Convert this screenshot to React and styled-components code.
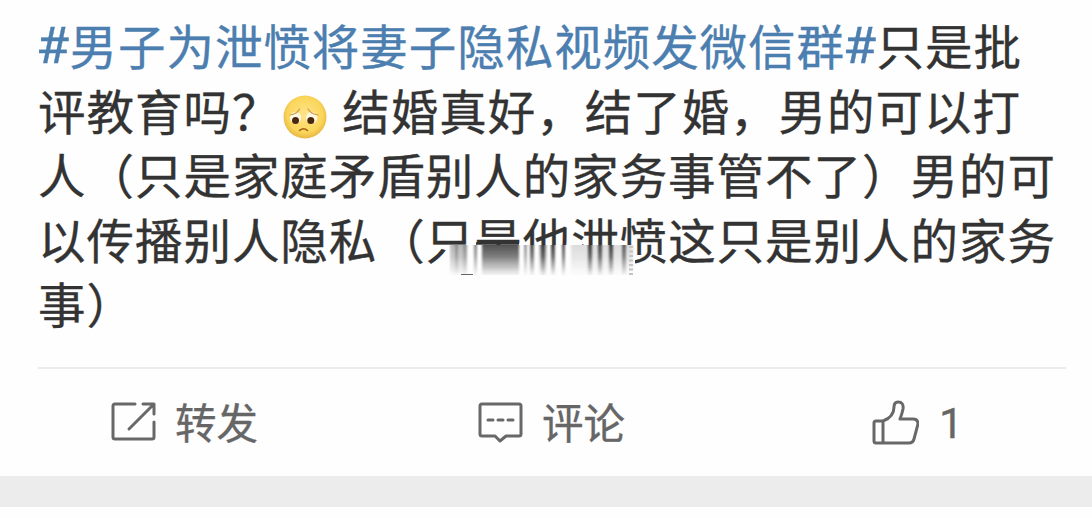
import React from 'react';
import styled, { createGlobalStyle } from 'styled-components';

const GlobalStyle = createGlobalStyle`
    body {
        margin: 0;
        background: #fefefe;
    }
`;

const Page = styled.div`
    box-sizing: border-box;
    width: 1092px;
    height: 518px;
    overflow: hidden;
    background: #fefefe;
    font-family: "Noto Sans CJK SC", "Noto Sans", sans-serif;
`;

const Post = styled.article`
    height: 476px;
    display: flex;
    flex-direction: column;
`;

const Content = styled.div`
    box-sizing: border-box;
    height: 367px;
    padding: 13px 0 0 38px;
    color: #333;
`;

const Line = styled.p`
    display: flex;
    align-items: center;
    margin: 0;
    height: 64.5px;
    line-height: 64.5px;
    font-size: 47.5px;
    letter-spacing: 0.97px;
    white-space: nowrap;
    -webkit-text-stroke: 0.35px currentColor;
`;

const Topic = styled.a`
    display: flex;
    color: #4c7fb0;
`;

const Hash = styled.span`
    width: 31.5px;
    font-family: Roboto, sans-serif;
    font-size: 50px;
    letter-spacing: 0;
    transform: translate(-2px, 1px) scaleX(1.08);
    transform-origin: 0 50%;
`;

const Emoji = styled.svg`
    width: 44px;
    height: 44px;
    margin: 14px 15px 0 3px;
`;

const Smudged = styled.span`
    position: relative;
`;

const Smear = styled.svg`
    position: absolute;
    left: 23px;
    top: 35px;
    width: 190px;
    height: 36px;
`;

const Actions = styled.div`
    box-sizing: border-box;
    display: grid;
    grid-template-columns: 367px 394px 1fr;
    height: 109px;
    margin: 0 26px 0 38px;
    border-top: 2px solid #ebebeb;
`;

const Action = styled.button`
    display: flex;
    align-items: center;
    gap: ${(props) => props.$gap}px;
    height: 104px;
    padding: 0 0 0 72px;
    border: 0;
    background: none;
    color: #666;
    font-family: inherit;
    font-size: 41.5px;
    -webkit-text-stroke: 0.35px currentColor;
`;

const Icon = styled.svg`
    width: 48px;
    height: 48px;
    margin-top: 6px;
    fill: none;
    stroke: #686868;
    stroke-width: 3;
    stroke-linecap: round;
    stroke-linejoin: round;
`;

const Count = styled.span`
    margin-top: 3px;
    font-family: Roboto, sans-serif;
    font-size: 43px;
`;

const Divider = styled.div`
    height: 31px;
    background: #ececec;
`;

const SadFace = () => (
    <Emoji viewBox="0 0 44 44">
        <defs>
            <radialGradient id="face" cx="0.5" cy="0.45" r="0.58">
                <stop offset="0" stopColor="#ffe48c" />
                <stop offset="0.7" stopColor="#fbd65a" />
                <stop offset="1" stopColor="#e3b140" />
            </radialGradient>
        </defs>
        <circle cx="22" cy="22" r="21.5" fill="url(#face)" />
        <ellipse cx="12.5" cy="22.8" rx="5.6" ry="6" fill="#fff8e5" />
        <ellipse cx="28.7" cy="22.8" rx="5.6" ry="6" fill="#fff8e5" />
        <circle cx="12.5" cy="25.5" r="3.5" fill="#49270f" />
        <circle cx="27.8" cy="25.5" r="3.5" fill="#49270f" />
        <path d="M7 20q7-1 9.500-6M25 14q3 5 10 6" fill="none" stroke="#cf9c3a" strokeWidth="1.2" strokeLinecap="round" />
        <path d="M16.500 35.500q4-3.500 8 0" fill="none" stroke="#a4641b" strokeWidth="1.6" strokeLinecap="round" />
    </Emoji>
);

// x, width, darkness of each vertical streak
const streaks = [
    [1, 17, 0.35], [6, 3, 0.35], [14, 4, 0.3],
    [25, 3, 0.6], [33, 37, 0.85],
    [75, 3, 0.5], [81, 4, 0.85], [92, 4, 0.95], [90, 8, 0.35], [102, 4, 0.95], [113, 3, 0.85],
    [122, 62, 0.16], [139, 4, 0.95], [149, 4, 0.9], [160, 4, 0.95], [173, 4, 0.75],
];

const SmearMark = () => (
    <Smear viewBox="0 0 190 36">
        <defs>
            <linearGradient id="fade" x1="0" y1="0" x2="0" y2="1">
                <stop offset="0" stopColor="#333" />
                <stop offset="0.4" stopColor="#444" stopOpacity="0.8" />
                <stop offset="0.75" stopColor="#777" stopOpacity="0.5" />
                <stop offset="1" stopColor="#999" stopOpacity="0.12" />
            </linearGradient>
            <filter id="soft" x="-5%" y="-5%" width="110%" height="110%">
                <feGaussianBlur stdDeviation="1 0.2" />
            </filter>
        </defs>
        <path d="M1 3H186V34H1Z" fill="#fefefe" />
        <g filter="url(#soft)">
            {streaks.map(([x, width, opacity]) => (
                <rect key={x} x={x} y="3" width={width} height="30" fill="url(#fade)" opacity={opacity} />
            ))}
        </g>
        <path d="M27 1.500h43" stroke="#333" strokeWidth="2.5" />
        <path d="M12 32.500h12" stroke="#666" strokeWidth="1" />
        <path d="M182 4v29" stroke="#c4c4c4" strokeWidth="4" strokeDasharray="2 2.500" />
    </Smear>
);

const App = () => {
    return (
        <>
            <GlobalStyle />
            <Page>
                <Post>
                    <Content>
                        <Line>
                            <Topic><Hash>#</Hash>男子为泄愤将妻子隐私视频发微信群<Hash>#</Hash></Topic>
                            只是批
                        </Line>
                        <Line>
                            评教育吗？
                            <SadFace />
                            结婚真好，结了婚，男的可以打
                        </Line>
                        <Line>人（只是家庭矛盾别人的家务事管不了）男的可</Line>
                        <Line>
                            以传播别人隐私（
                            <Smudged>只是他泄<SmearMark /></Smudged>
                            愤这只是别人的家务
                        </Line>
                        <Line>事）</Line>
                    </Content>
                    <Actions>
                        <Action $gap={17}>
                            <Icon viewBox="0 0 48 48">
                                <path d="M25 4H5Q3 4 3 6v31q0 2 2 2h37q2 0 2-2V22" />
                                <path d="M33 4h11v10M43 5L19 29" />
                            </Icon>
                            转发
                        </Action>
                        <Action $gap={17}>
                            <Icon viewBox="0 0 48 48">
                                <path d="M5 4h37q2 0 2 2v28q0 2-2 2H29l-6 5-5-5H5q-2 0-2-2V6q0-2 2-2Z" />
                                <path d="M11 20h5M21 20h5M31 20h5" />
                            </Icon>
                            评论
                        </Action>
                        <Action $gap={20}>
                            <Icon viewBox="0 0 48 48">
                                <path d="M5 21h7q11-4 11-14 0-5 4-5 6 0 5 7-1 5-3 10h13q5 0 5 5l-4 15q-1 4-5 4H5q-2 0-2-2V23q0-2 2-2ZM12 21v22" />
                            </Icon>
                            <Count>1</Count>
                        </Action>
                    </Actions>
                </Post>
                <Divider />
            </Page>
        </>
    );
};

export default App;
